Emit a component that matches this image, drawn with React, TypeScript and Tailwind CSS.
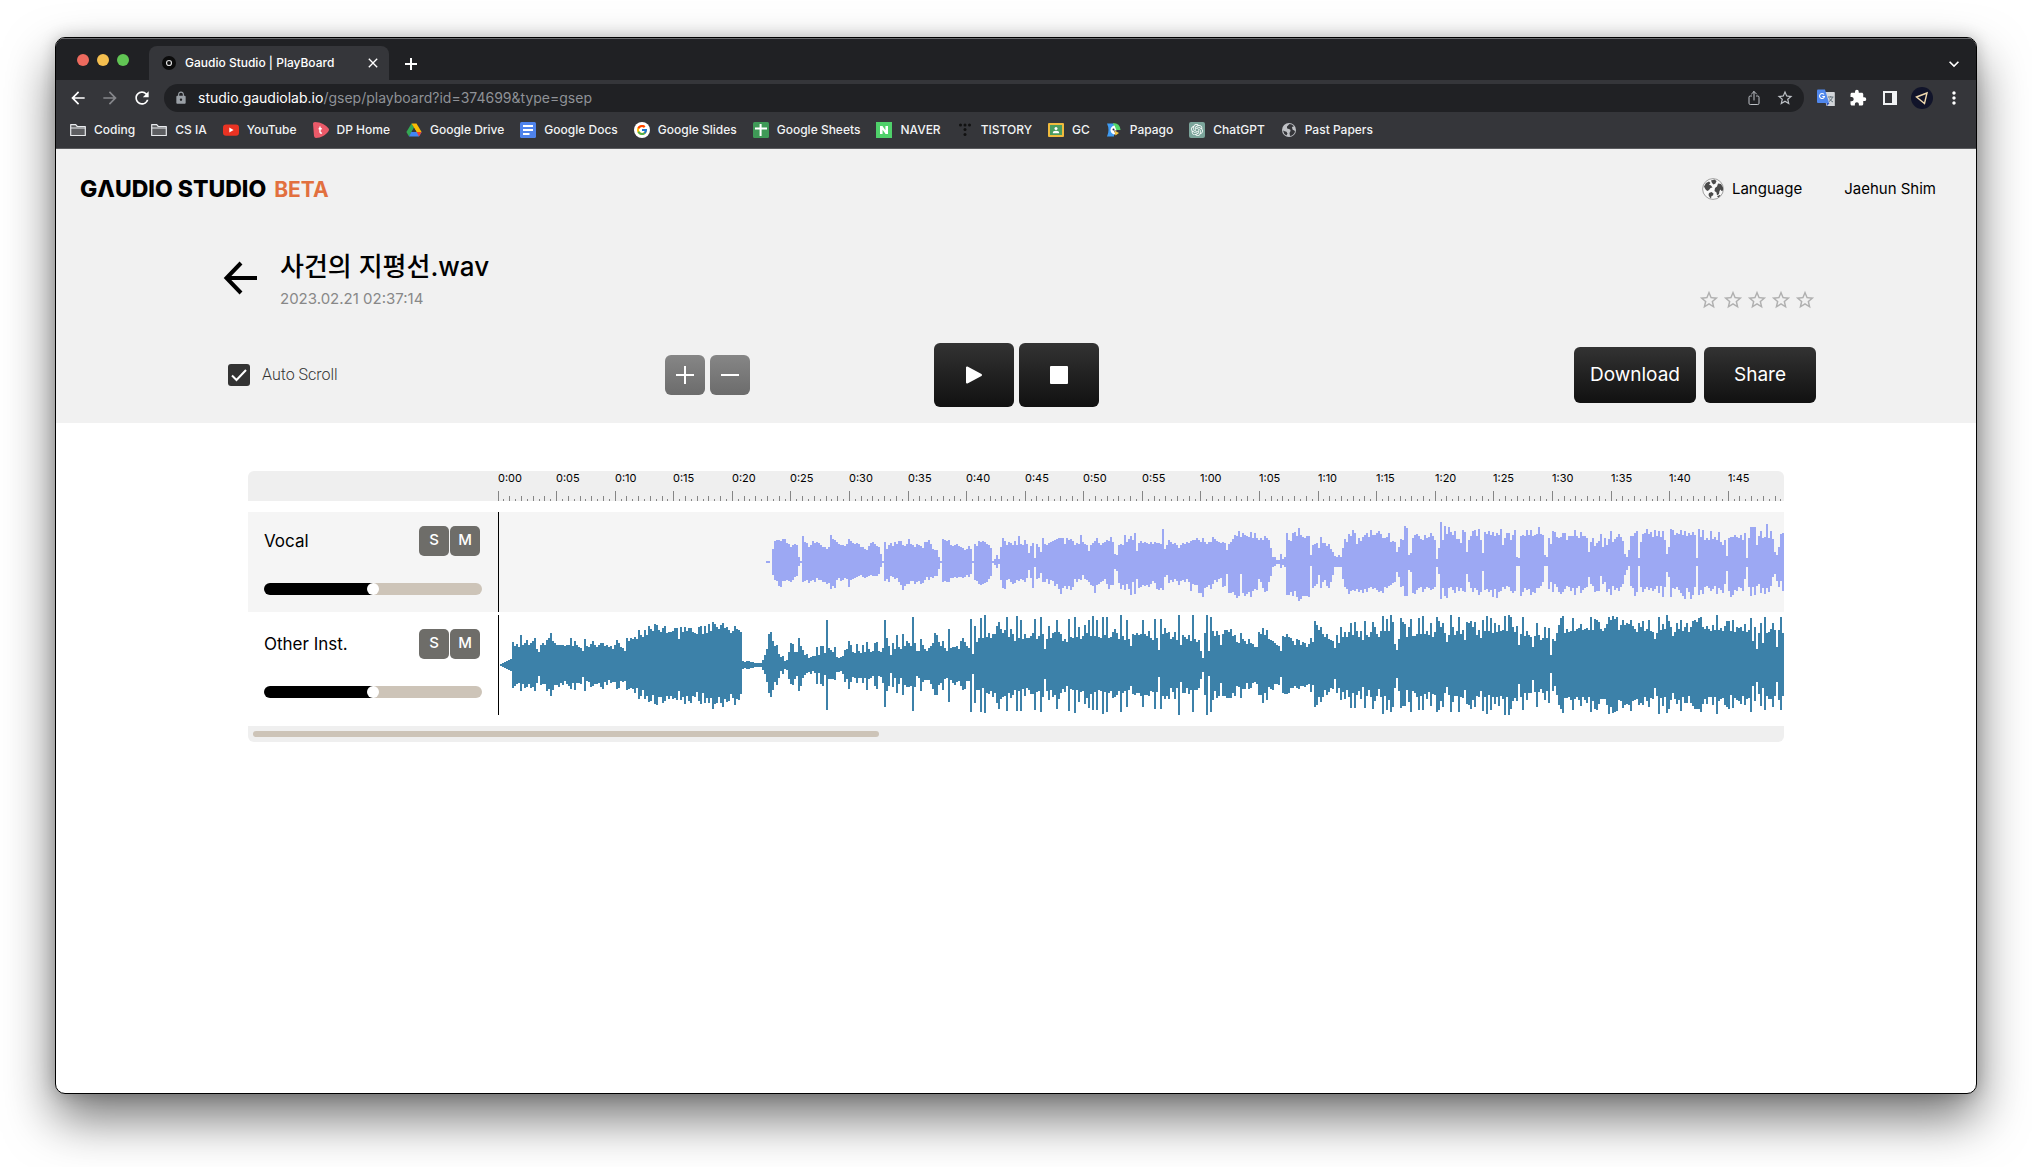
import type { ReactNode } from "react";
import { FcGoogle } from "react-icons/fc";
import { IoShareOutline } from "react-icons/io5";
import {
  MdArrowBack,
  MdArrowForward,
  MdClose,
  MdExtension,
  MdKeyboardArrowDown,
  MdLock,
  MdMoreVert,
  MdRefresh,
  MdStarBorder,
} from "react-icons/md";
import { SiNaver, SiOpenai } from "react-icons/si";

const PX_PER_SECOND = 58.58 / 5;
const BAR_WIDTH = 2;

// first audible bar of the vocal track
const VOCAL_START = 134;

const VOCAL_UP = [
  1, 1, 0, 13, 21, 22, 22, 21, 23, 23, 19, 18, 15, 17, 18, 17, 5, 1, 26, 20, 19, 15, 17, 21, 19, 20, 19, 17, 15, 15, 13, 15,
  27, 23, 22, 20, 18, 17, 17, 16, 18, 23, 21, 19, 18, 19, 18, 15, 15, 13, 12, 16, 19, 20, 18, 16, 15, 8, 1, 20, 13, 17, 19,
  16, 20, 18, 21, 21, 17, 16, 18, 23, 18, 17, 15, 18, 17, 16, 14, 20, 20, 22, 18, 13, 12, 12, 5, 1, 23, 22, 21, 22, 17, 16,
  17, 18, 16, 15, 14, 12, 13, 16, 13, 1, 18, 16, 21, 20, 21, 20, 18, 17, 14, 1, 3, 7, 3, 15, 24, 21, 17, 20, 19, 17, 21, 17,
  26, 18, 17, 22, 18, 9, 16, 19, 4, 18, 15, 10, 24, 18, 17, 19, 20, 21, 22, 23, 24, 24, 24, 18, 24, 22, 23, 21, 17, 19, 18,
  27, 20, 18, 17, 11, 17, 19, 21, 24, 19, 17, 19, 20, 22, 21, 25, 20, 8, 7, 17, 18, 17, 27, 20, 23, 26, 22, 29, 11, 19, 21,
  19, 20, 19, 18, 20, 18, 20, 19, 19, 18, 33, 13, 17, 22, 20, 18, 19, 17, 14, 17, 19, 18, 20, 19, 21, 22, 22, 24, 22, 20,
  24, 20, 18, 20, 20, 25, 23, 21, 20, 19, 20, 19, 12, 18, 20, 23, 27, 26, 31, 25, 29, 27, 26, 25, 30, 24, 29, 24, 22, 24,
  22, 26, 24, 22, 14, 5, 5, 2, 2, 8, 3, 5, 29, 22, 21, 29, 30, 26, 34, 27, 25, 24, 26, 26, 7, 17, 18, 19, 14, 25, 19, 19,
  16, 18, 13, 10, 6, 5, 7, 5, 14, 23, 20, 28, 26, 32, 29, 18, 24, 21, 25, 27, 29, 25, 32, 27, 27, 29, 31, 28, 24, 24, 25,
  29, 20, 21, 20, 10, 15, 23, 22, 36, 34, 7, 9, 24, 27, 28, 26, 23, 22, 27, 24, 25, 29, 26, 22, 3, 14, 40, 22, 36, 28, 35,
  30, 27, 31, 23, 23, 19, 32, 30, 10, 22, 26, 31, 32, 26, 33, 22, 9, 30, 28, 31, 27, 30, 26, 29, 27, 33, 17, 24, 29, 29,
  22, 27, 32, 5, 4, 26, 27, 26, 32, 27, 32, 26, 27, 28, 35, 28, 27, 7, 5, 24, 18, 31, 30, 25, 24, 25, 29, 29, 22, 26, 26,
  26, 32, 26, 24, 30, 26, 26, 24, 10, 20, 24, 16, 19, 21, 28, 15, 24, 17, 23, 31, 20, 23, 25, 28, 25, 21, 8, 5, 12, 26, 26,
  29, 31, 4, 20, 28, 29, 33, 28, 30, 25, 32, 26, 31, 25, 31, 22, 8, 15, 33, 32, 27, 29, 28, 32, 27, 31, 26, 29, 27, 30, 27,
  4, 33, 25, 32, 22, 24, 22, 31, 23, 25, 22, 30, 20, 17, 22, 6, 24, 25, 25, 27, 25, 24, 27, 22, 29, 4, 24, 35, 35, 35, 17,
  26, 31, 24, 25, 38, 24, 31, 23, 10, 7, 15, 28, 29,
];

const VOCAL_DOWN = [
  1, 1, 0, 13, 18, 19, 24, 25, 19, 19, 18, 19, 20, 18, 15, 14, 4, 1, 20, 19, 18, 21, 19, 18, 20, 16, 18, 18, 20, 20, 22, 21,
  27, 24, 26, 18, 16, 19, 18, 16, 17, 25, 18, 17, 16, 15, 14, 13, 15, 16, 15, 14, 13, 14, 14, 14, 12, 5, 1, 19, 17, 20, 14,
  15, 17, 16, 20, 23, 28, 24, 22, 22, 19, 19, 22, 20, 19, 22, 21, 18, 15, 18, 15, 16, 14, 14, 7, 1, 20, 19, 20, 20, 16, 16,
  15, 16, 15, 15, 16, 15, 13, 15, 12, 1, 18, 19, 22, 23, 22, 21, 20, 17, 14, 1, 3, 6, 2, 18, 26, 27, 18, 17, 20, 22, 21, 18,
  19, 17, 18, 20, 16, 8, 16, 26, 5, 17, 16, 11, 20, 20, 17, 22, 18, 19, 24, 22, 27, 32, 26, 24, 27, 24, 28, 25, 17, 20, 17,
  18, 13, 17, 18, 20, 23, 24, 31, 23, 22, 20, 19, 17, 22, 27, 23, 23, 7, 9, 21, 27, 23, 28, 22, 27, 33, 20, 32, 17, 26, 25,
  23, 24, 23, 25, 22, 19, 21, 27, 28, 26, 28, 15, 13, 21, 18, 20, 17, 19, 23, 19, 18, 20, 17, 20, 29, 22, 23, 23, 31, 31,
  35, 26, 25, 23, 27, 22, 18, 20, 17, 16, 25, 24, 12, 31, 31, 30, 33, 36, 34, 12, 31, 34, 32, 30, 35, 29, 27, 28, 17, 20,
  26, 30, 29, 20, 14, 5, 4, 2, 2, 6, 3, 5, 33, 33, 30, 34, 29, 35, 39, 37, 34, 34, 34, 35, 4, 26, 24, 22, 13, 26, 20, 18,
  24, 26, 20, 13, 5, 5, 5, 5, 17, 25, 27, 32, 29, 28, 29, 27, 30, 28, 31, 27, 30, 26, 25, 27, 26, 28, 30, 29, 31, 25, 26,
  24, 23, 21, 20, 10, 15, 25, 24, 34, 34, 8, 10, 31, 32, 28, 26, 25, 30, 27, 25, 26, 28, 27, 25, 5, 12, 37, 26, 34, 36, 26,
  25, 28, 31, 25, 29, 26, 29, 30, 12, 20, 26, 30, 26, 28, 33, 30, 9, 28, 27, 30, 28, 35, 27, 36, 30, 29, 25, 27, 24, 25,
  29, 31, 29, 4, 4, 34, 30, 26, 28, 27, 33, 30, 31, 26, 26, 24, 20, 4, 4, 27, 20, 30, 22, 25, 30, 32, 30, 27, 24, 25, 29,
  26, 33, 26, 24, 31, 28, 26, 25, 15, 22, 24, 30, 29, 29, 14, 22, 20, 30, 27, 33, 24, 28, 26, 29, 25, 22, 13, 8, 4, 24, 26,
  34, 30, 4, 25, 30, 27, 25, 28, 26, 29, 27, 24, 31, 24, 35, 25, 10, 15, 35, 26, 27, 25, 28, 31, 34, 37, 26, 30, 37, 33,
  25, 4, 33, 28, 32, 25, 24, 26, 29, 27, 24, 32, 26, 28, 31, 22, 9, 29, 35, 33, 28, 29, 25, 26, 29, 17, 5, 25, 34, 25, 33,
  24, 22, 31, 26, 32, 26, 30, 24, 15, 12, 19, 25, 19,
];

const INST_UP = [
  0, 1, 2, 3, 4, 5, 6, 23, 19, 21, 18, 30, 20, 22, 25, 20, 22, 24, 27, 16, 13, 20, 22, 20, 25, 27, 32, 24, 22, 20, 20, 20, 20,
  19, 20, 20, 27, 19, 24, 20, 18, 17, 14, 26, 19, 18, 21, 24, 20, 18, 20, 22, 22, 19, 20, 18, 19, 16, 20, 25, 22, 18, 17, 14,
  27, 24, 27, 26, 28, 26, 35, 30, 28, 35, 30, 39, 36, 34, 41, 40, 35, 33, 37, 39, 32, 33, 33, 34, 37, 37, 26, 38, 33, 38, 34,
  37, 37, 33, 32, 31, 38, 39, 31, 39, 32, 41, 34, 43, 41, 38, 36, 40, 42, 37, 38, 35, 32, 34, 39, 36, 35, 33, 4, 3, 4, 4, 3,
  3, 2, 2, 2, 2, 5, 10, 16, 31, 33, 24, 19, 20, 11, 8, 9, 4, 5, 13, 22, 21, 13, 13, 27, 19, 15, 10, 11, 7, 8, 9, 9, 18, 10,
  19, 19, 12, 45, 17, 15, 13, 18, 8, 7, 8, 9, 15, 16, 24, 20, 13, 12, 21, 14, 12, 20, 13, 23, 16, 13, 14, 22, 23, 14, 13, 17,
  45, 27, 19, 10, 22, 16, 30, 18, 16, 31, 19, 24, 22, 19, 48, 22, 14, 14, 26, 20, 16, 14, 17, 19, 22, 32, 30, 23, 19, 24, 17,
  14, 36, 17, 18, 18, 19, 16, 24, 27, 23, 19, 17, 46, 11, 39, 23, 27, 47, 27, 50, 28, 32, 27, 31, 31, 39, 43, 36, 32, 35, 48,
  28, 36, 31, 24, 49, 27, 45, 26, 31, 27, 27, 29, 32, 46, 26, 29, 48, 31, 16, 26, 39, 27, 32, 33, 45, 33, 31, 24, 26, 23, 46,
  28, 27, 48, 28, 38, 26, 29, 40, 32, 45, 29, 49, 29, 45, 28, 27, 48, 30, 48, 27, 28, 33, 36, 32, 26, 50, 29, 25, 45, 26, 19,
  31, 30, 32, 30, 31, 45, 31, 29, 34, 27, 25, 46, 27, 15, 46, 31, 37, 32, 33, 26, 28, 33, 25, 50, 20, 30, 28, 26, 30, 24, 50,
  26, 23, 25, 14, 7, 32, 50, 14, 48, 34, 29, 34, 30, 20, 31, 35, 35, 33, 36, 29, 30, 23, 22, 32, 26, 24, 21, 26, 22, 21, 18,
  18, 33, 31, 37, 30, 35, 26, 25, 24, 22, 20, 19, 14, 29, 28, 31, 28, 27, 24, 20, 26, 25, 20, 23, 22, 18, 21, 27, 23, 44, 40,
  35, 38, 31, 28, 31, 26, 25, 24, 17, 30, 22, 38, 28, 33, 28, 33, 42, 30, 43, 34, 28, 34, 25, 44, 30, 28, 33, 43, 38, 31, 28,
  34, 49, 34, 46, 34, 50, 43, 21, 15, 26, 47, 43, 41, 28, 38, 46, 29, 29, 31, 47, 31, 49, 31, 34, 30, 42, 28, 33, 48, 44, 38,
  42, 32, 23, 30, 50, 38, 30, 34, 48, 31, 35, 25, 43, 42, 44, 38, 43, 30, 35, 27, 45, 34, 49, 34, 47, 32, 42, 33, 40, 34, 35,
  49, 34, 50, 48, 38, 33, 39, 20, 31, 48, 29, 34, 30, 28, 18, 29, 42, 30, 25, 27, 38, 27, 37, 10, 26, 24, 32, 40, 47, 49, 32,
  36, 33, 34, 47, 34, 36, 37, 41, 35, 36, 37, 35, 48, 35, 46, 45, 43, 36, 34, 37, 41, 48, 45, 49, 46, 48, 35, 40, 45, 40, 42,
  41, 45, 39, 36, 33, 42, 38, 44, 34, 36, 45, 34, 33, 26, 32, 48, 35, 41, 36, 50, 44, 38, 29, 33, 42, 36, 45, 34, 38, 42, 33,
  38, 44, 45, 43, 47, 48, 38, 36, 39, 36, 34, 40, 35, 50, 35, 37, 34, 39, 44, 44, 34, 45, 33, 38, 37, 38, 34, 41, 33, 35, 47,
  24, 38, 16, 32, 42, 22, 48, 32, 33, 36, 42, 35, 18, 35, 48, 32,
];

// the instrument track is close to symmetric, the lower half only wobbles a little
const INST_DOWN = INST_UP.map((h, i) =>
  h < 8 ? h : Math.min(50, Math.round(h * 0.98 + ((i * 37) % 11) / 2 - 3))
);

const wavePath = (up: number[], down: number[], start = 0) =>
  up
    .map((h, i) => {
      const d = down[i] ?? h;
      return h + d === 0 ? "" : `M${(start + i) * BAR_WIDTH} ${50 - h}h${BAR_WIDTH}v${h + d}h-${BAR_WIDTH}z`;
    })
    .join("");

const tracks = [
  {
    name: "Vocal",
    row: "bg-[#f5f5f5]",
    wave: "fill-[#9ca8f3]",
    path: wavePath(VOCAL_UP, VOCAL_DOWN, VOCAL_START),
  },
  {
    name: "Other Inst.",
    row: "bg-white",
    wave: "fill-[#3c81a9]",
    path: wavePath(INST_UP, INST_DOWN),
  },
];

const FolderIcon = () => (
  <svg viewBox="0 0 16 16" className="w-4 h-4">
    <path d="M.7 2.6h5l1.6 1.9h8v9H.7z" fill="#5d5e61" stroke="#e8eaed" strokeWidth="1.2" strokeLinejoin="round" />
    <path d="M.7 6h14.6" stroke="#e8eaed" />
  </svg>
);

const YoutubeIcon = () => (
  <svg viewBox="0 0 16 16" className="w-4 h-4">
    <rect y="2.4" width="16" height="11.4" rx="3" fill="#ea3323" />
    <path d="M6.3 5.6v5l4.3-2.5z" fill="#fff" />
  </svg>
);

const DpIcon = () => (
  <svg viewBox="0 0 16 16" className="w-4 h-4">
    <path d="M0 1.5Q0 0 2 0c6 0 11 3 13.6 6.6q.8 1.2 0 2.4C13 13 8 16 3 16q-1.6 0-2-2z" fill="#eb5a69" />
    <path d="M7 4.6v5.2q0 1.6 2 1.2M5.6 6.7h3.2" fill="none" stroke="#fff" strokeWidth="1.4" />
  </svg>
);

const DriveIcon = () => (
  <svg viewBox="0 0 16 16" className="w-4 h-4">
    <path d="M5.5 1.5 8 5.8 3 14.4.4 10z" fill="#34a853" />
    <path d="M5.5 1.5h5L15.6 10h-5z" fill="#fbbc04" />
    <path d="M5.3 10.1h10.3L13 14.5H3z" fill="#4285f4" />
    <path d="M10.6 10.1h5L13 14.5z" fill="#ea4335" />
    <path d="M8 6 5.6 10.1h4.8z" fill="#35363a" />
  </svg>
);

const DocsIcon = () => (
  <svg viewBox="0 0 16 16" className="w-4 h-4">
    <rect width="16" height="16" rx="1.5" fill="#4f83ec" />
    <path d="M3 4h10M3 8h10M3 12h6.5" stroke="#fff" strokeWidth="1.8" />
  </svg>
);

const SlidesIcon = () => (
  <span className="grid place-items-center w-4 h-4 rounded-full bg-white">
    <FcGoogle className="w-3 h-3" />
  </span>
);

const SheetsIcon = () => (
  <svg viewBox="0 0 16 16" className="w-4 h-4">
    <rect width="16" height="16" rx="1.5" fill="#3f9a57" />
    <path d="M2 6.5h12M7.6 2v12" stroke="#fff" strokeWidth="2" />
  </svg>
);

const NaverIcon = () => (
  <span className="grid place-items-center w-4 h-4 bg-[#4fd06a]">
    <SiNaver className="w-2 h-2 text-white" />
  </span>
);

const TistoryIcon = () => (
  <svg viewBox="0 0 16 16" className="w-4 h-4" fill="#111">
    <circle cx="3.5" cy="3" r="1.5" />
    <circle cx="8" cy="3" r="1.5" />
    <circle cx="12.5" cy="3" r="1.5" />
    <circle cx="8" cy="7.5" r="1.5" />
    <circle cx="8" cy="12.5" r="1.5" />
  </svg>
);

const ClassroomIcon = () => (
  <svg viewBox="0 0 16 16" className="w-4 h-4">
    <rect y="1" width="16" height="14" rx="1" fill="#f0bb3d" />
    <rect x="2" y="3" width="12" height="10" fill="#4a9c5f" />
    <circle cx="8" cy="6.5" r="1.5" fill="#fff" />
    <path d="M4.8 11.2q0-2.4 3.2-2.4t3.2 2.4z" fill="#fff" />
  </svg>
);

const PapagoIcon = () => (
  <svg viewBox="0 0 16 16" className="w-4 h-4">
    <path d="M1 1.5h7v13H1q3-6.5 0-13z" fill="#3f9bf2" />
    <path d="M7 1q7 0 7.5 7H9z" fill="#53d769" />
    <path d="M8.5 3.5a4.5 4.5 0 1 0 1 9L8 8.5h2.5z" fill="#fff" />
    <path d="M8.5 8.5l4.5 2.5-3.5 2.5z" fill="#f8c744" />
    <circle cx="7.5" cy="7.5" r="1" fill="#223" />
  </svg>
);

const ChatGptIcon = () => (
  <span className="grid place-items-center w-4 h-4 rounded-xs bg-[#7ba59b]">
    <SiOpenai className="w-3 h-3 text-white" />
  </span>
);

const PastPapersIcon = () => (
  <svg viewBox="0 0 16 16" className="w-4 h-4">
    <circle cx="8" cy="8" r="7" fill="#bfc1c5" />
    <path d="M8.5 2 6 4.5q-.5 2.5 2 2.5 2 .5 1.5 2L8.500 11l.5 3q4.5-.8 5-5l-2.5-1.5L11 5l2-.8Q11 2 8.5 2z" fill="#35363a" />
    <path d="M2 8.5q1.5 1 3.5 1.2l1 1.8-1 2Q2.5 12 2 8.5z" fill="#35363a" />
  </svg>
);

const GlobeIcon = () => (
  <svg viewBox="0 0 22 22" className="w-[22px] h-[22px]">
    <circle cx="11" cy="11" r="10.4" fill="#f8f8f8" stroke="#8a8a8a" strokeWidth=".8" />
    <g fill="#4a4a4a">
      <path d="M2 8.5 4 5l3-1.5L8.5 5 7 6.5l2 1 1.5 2-2 .5-1.5 2-1.5 1L4 12l-1-1.5z" />
      <path d="M9 2.5 12.5 1.5l2 1.5-1 2.5-2 1L10 5z" />
      <path d="M7 15l2.5-1 2 1.5-.5 2-1.5.5-.5 2.5L7.5 19 6.5 17z" />
      <path d="M16 5.5l3 .5 2 3.5v3l-1.5.5-1-1.5-1 1.5-.5 3-2 1.5-.5-3-2-1.5.5-3 2-1.5z" />
      <path d="M15 18.5l2.5-1.5 1 .5-2 2z" />
    </g>
  </svg>
);

const TranslateIcon = () => (
  <svg viewBox="0 0 18 18" className="w-[18px] h-[18px]">
    <path d="M6 3h11q.8 0 .8.8V17H9.5z" fill="#d3d6da" />
    <path d="M11 8h5.5M13.7 7v1.2M12 12.5q3-1.5 3.5-4.5M12.5 9.5q1 2.5 3.5 3.5" stroke="#68777f" fill="none" />
    <path d="M1 .5h7L12 14H1q-1 0-1-1V1.5Q0 .5 1 .5z" fill="#5087ec" />
    <path d="M9.5 14h3L10 17z" fill="#2d50b8" />
    <path d="M7 5.5A2.5 2.5 0 1 0 7.5 7.5H5.3" stroke="#fff" strokeWidth="1.1" fill="none" />
  </svg>
);

const ProfileIcon = () => (
  <svg viewBox="0 0 22 22" className="w-[22px] h-[22px]">
    <circle cx="11" cy="11" r="11" fill="#11142a" />
    <path d="M5.5 10 16 6l-2.5 10.5z" fill="none" stroke="#f0d9b0" strokeWidth="1.4" />
  </svg>
);

const bookmarks: { label: string; icon: ReactNode }[] = [
  { label: "Coding", icon: <FolderIcon /> },
  { label: "CS IA", icon: <FolderIcon /> },
  { label: "YouTube", icon: <YoutubeIcon /> },
  { label: "DP Home", icon: <DpIcon /> },
  { label: "Google Drive", icon: <DriveIcon /> },
  { label: "Google Docs", icon: <DocsIcon /> },
  { label: "Google Slides", icon: <SlidesIcon /> },
  { label: "Google Sheets", icon: <SheetsIcon /> },
  { label: "NAVER", icon: <NaverIcon /> },
  { label: "TISTORY", icon: <TistoryIcon /> },
  { label: "GC", icon: <ClassroomIcon /> },
  { label: "Papago", icon: <PapagoIcon /> },
  { label: "ChatGPT", icon: <ChatGptIcon /> },
  { label: "Past Papers", icon: <PastPapersIcon /> },
];

const TabStrip = () => (
  <div className="flex items-end h-[41px] pl-[21px] pr-3 bg-[#202124]">
    <div className="flex gap-2 self-center">
      <button aria-label="Close window" className="w-3 h-3 rounded-full bg-[#ed6a5e]" />
      <button aria-label="Minimize window" className="w-3 h-3 rounded-full bg-[#f5bf4f]" />
      <button aria-label="Zoom window" className="w-3 h-3 rounded-full bg-[#61c554]" />
    </div>
    <div className="flex items-center w-60 h-[34px] ml-5 pl-3 pr-2 rounded-t-lg bg-[#35363a] text-white">
      <svg viewBox="0 0 16 16" className="w-4 h-4 mr-2">
        <circle cx="8" cy="8" r="7" fill="#0c0c0c" />
        <circle cx="8" cy="8" r="2.5" fill="none" stroke="#ddd" strokeWidth="1.2" />
      </svg>
      <p className="flex-1 text-xs font-medium whitespace-nowrap">Gaudio Studio | PlayBoard</p>
      <button aria-label="Close tab">
        <MdClose className="w-4 h-4" />
      </button>
    </div>
    <button aria-label="New tab" className="self-center ml-4 mt-2 text-white">
      <svg viewBox="0 0 12 12" className="w-3 h-3">
        <path d="M6 0v12M0 6h12" stroke="currentColor" strokeWidth="2" />
      </svg>
    </button>
    <button aria-label="Search tabs" className="self-center ml-auto mt-2 text-white">
      <MdKeyboardArrowDown className="w-5 h-5" />
    </button>
  </div>
);

const AddressBar = () => (
  <div className="flex items-center h-9 pl-3 pr-1.5 text-white">
    <div className="flex gap-3">
      <button aria-label="Back">
        <MdArrowBack className="w-5 h-5" />
      </button>
      <button aria-label="Forward">
        <MdArrowForward className="w-5 h-5 text-[#85868a]" />
      </button>
      <button aria-label="Reload">
        <MdRefresh className="w-5 h-5" />
      </button>
    </div>
    <div className="flex flex-1 items-center h-7 ml-3 px-2.5 rounded-full bg-[#202124] text-[#bdc1c6]">
      <MdLock className="w-3.5 h-3.5 mr-2.5 text-[#9aa0a6]" />
      <p className="flex-1 text-sm text-[#8f9297]">
        <span className="text-white">studio.gaudiolab.io</span>/gsep/playboard?id=374699&amp;type=gsep
      </p>
      <button aria-label="Share this page">
        <IoShareOutline className="w-4 h-4" />
      </button>
      <button aria-label="Bookmark this page" className="ml-3.5">
        <MdStarBorder className="w-[18px] h-[18px]" />
      </button>
    </div>
    <div className="grid grid-cols-5 place-items-center w-40 ml-1.5">
      <button aria-label="Translate">
        <TranslateIcon />
      </button>
      <button aria-label="Extensions">
        <MdExtension className="w-[18px] h-[18px]" />
      </button>
      <button aria-label="Side panel">
        <svg viewBox="0 0 16 16" className="w-4 h-4">
          <path d="M1 1h14v14H1z" fill="#f1f3f4" />
          <path d="M3 3h7v10H3z" fill="#35363a" />
        </svg>
      </button>
      <button aria-label="Profile">
        <ProfileIcon />
      </button>
      <button aria-label="Browser menu">
        <MdMoreVert className="w-5 h-5" />
      </button>
    </div>
  </div>
);

const BookmarkBar = () => (
  <nav className="flex items-center gap-4 h-[33px] pl-3.5 pb-1 border-b border-[#5b5c5f] overflow-hidden">
    {bookmarks.map(({ label, icon }) => (
      <a key={label} href="#" className="flex shrink-0 items-center gap-2 text-xs font-medium text-[#f1f3f4]">
        {icon}
        {label}
      </a>
    ))}
  </nav>
);

const SiteHeader = () => (
  <header className="flex items-center justify-between h-20 pl-6 pr-10">
    <a href="#" className="flex items-baseline gap-2 leading-6 text-black">
      <span className="text-[23px] font-extrabold">GΛUDIO STUDIO</span>
      <span className="text-[21px] font-bold text-[#e2703f]">BETA</span>
    </a>
    <div className="flex gap-[42px] text-[15px] text-black">
      <button className="flex items-center gap-2">
        <GlobeIcon />
        Language
      </button>
      <button>Jaehun Shim</button>
    </div>
  </header>
);

const FileInfo = () => (
  <div className="flex justify-between px-40 pt-5">
    <div className="flex items-center gap-5">
      <button aria-label="Back to list" className="ml-1 mb-1">
        <svg viewBox="0 0 40 40" className="w-10 h-10" fill="none" stroke="#000" strokeWidth="4">
          <path d="M37 20H7M21 5 6.5 20 21 35" />
        </svg>
      </button>
      <div>
        <h1 className="text-[26px] leading-9 font-medium text-black">사건의 지평선.wav</h1>
        <p className="mt-0.5 text-[15px] leading-6 text-[#888]">2023.02.21 02:37:14</p>
      </div>
    </div>
    <div className="flex items-end gap-0.5">
      {[1, 2, 3, 4, 5].map((n) => (
        <button key={n} aria-label={`Rate ${n}`}>
          <MdStarBorder className="w-[22px] h-[22px] text-[#b0b0b0]" />
        </button>
      ))}
    </div>
  </div>
);

const Controls = () => (
  <div className="grid grid-cols-[1fr_auto_1fr] items-center px-40 pt-8 pb-4">
    <div className="flex items-center justify-between pl-3 pr-46">
      <label className="flex items-center gap-3 font-[Roboto] text-base font-light text-[#333]">
        <span className="grid">
          <input
            type="checkbox"
            defaultChecked
            className="col-start-1 row-start-1 appearance-none w-[22px] h-[22px] rounded-[3px] bg-[#333]"
          />
          <svg
            viewBox="0 0 22 22"
            className="col-start-1 row-start-1 w-[22px] h-[22px] pointer-events-none"
            fill="none"
            stroke="#fff"
            strokeWidth="2"
          >
            <path d="M4 11.5 8.5 16 18 6" />
          </svg>
        </span>
        Auto Scroll
      </label>
      <div className="flex gap-[5px]">
        <button
          aria-label="Zoom in"
          className="grid place-items-center w-10 h-10 rounded-md bg-linear-to-b from-[#868686] to-[#6c6c6c]"
        >
          <svg viewBox="0 0 18 18" className="w-[18px] h-[18px]">
            <path d="M9 0v18M0 9h18" stroke="#fff" strokeWidth="2" />
          </svg>
        </button>
        <button
          aria-label="Zoom out"
          className="grid place-items-center w-10 h-10 rounded-md bg-linear-to-b from-[#868686] to-[#6c6c6c]"
        >
          <svg viewBox="0 0 18 18" className="w-[18px] h-[18px]">
            <path d="M0 9h18" stroke="#fff" strokeWidth="2" />
          </svg>
        </button>
      </div>
    </div>
    <div className="flex gap-[5px]">
      <button
        aria-label="Play"
        className="grid place-items-center w-20 h-16 rounded-md bg-linear-to-b from-[#333] to-[#111]"
      >
        <svg viewBox="0 0 18 18" className="w-[18px] h-[18px]">
          <path d="M2 1.5v15l14-7.5z" fill="#fff" stroke="#fff" strokeWidth="2" strokeLinejoin="round" />
        </svg>
      </button>
      <button
        aria-label="Stop"
        className="grid place-items-center w-20 h-16 rounded-md bg-linear-to-b from-[#333] to-[#111]"
      >
        <span className="w-[18px] h-[18px] rounded-[1px] bg-white" />
      </button>
    </div>
    <div className="flex justify-end gap-2 text-[19px] text-white">
      <button className="w-[122px] h-14 rounded-md bg-linear-to-b from-[#333] to-[#111]">Download</button>
      <button className="w-28 h-14 rounded-md bg-linear-to-b from-[#333] to-[#111]">Share</button>
    </div>
  </div>
);

const Ruler = () => {
  const ticks = Array.from({ length: 220 }, (_, i) => i);

  return (
    <div className="h-[30px] pl-[250px] rounded-t-md bg-[#efefef] overflow-hidden">
      <svg className="w-full h-[30px]">
        {ticks.map((i) => {
          const x = Math.floor((i / 2) * PX_PER_SECOND);
          const height = i % 10 === 0 ? 10 : i % 2 === 0 ? 5 : 2;
          return <rect key={i} x={x} y={30 - height} width="1" height={height} fill="#858585" />;
        })}
        {ticks
          .filter((i) => i % 10 === 0)
          .map((i) => {
            const seconds = i / 2;
            const label = `${Math.floor(seconds / 60)}:${String(seconds % 60).padStart(2, "0")}`;
            return (
              <text key={i} x={Math.floor(seconds * PX_PER_SECOND)} y="11" className="text-[11px] fill-black">
                {label}
              </text>
            );
          })}
      </svg>
    </div>
  );
};

const Track = ({ name, row, wave, path }: { name: string; row: string; wave: string; path: string }) => (
  <div className={`flex h-[100px] ${row}`}>
    <div className="flex flex-col justify-between shrink-0 w-[250px] px-4 pt-3.5 pb-[17px]">
      <div className="flex items-center justify-between pr-0.5">
        <p className="text-[17px] leading-6 text-black">{name}</p>
        <div className="flex gap-px text-[15px] font-medium text-white">
          <button aria-label={`Solo ${name}`} className="w-[30px] h-[30px] pb-0.5 rounded-[5px] bg-[#6e6d69]">
            S
          </button>
          <button aria-label={`Mute ${name}`} className="w-[30px] h-[30px] pb-0.5 rounded-[5px] bg-[#6e6d69]">
            M
          </button>
        </div>
      </div>
      <input
        type="range"
        aria-label={`${name} volume`}
        defaultValue={50}
        className="appearance-none w-full h-3 rounded-full bg-[linear-gradient(to_right,#000_50%,#cdc4b8_50%)] [&::-webkit-slider-thumb]:appearance-none [&::-webkit-slider-thumb]:w-3 [&::-webkit-slider-thumb]:h-3 [&::-webkit-slider-thumb]:rounded-full [&::-webkit-slider-thumb]:bg-white"
      />
    </div>
    <div className="flex flex-1 min-w-0">
      <div className="w-px bg-black" />
      <svg className="flex-1 min-w-0 h-[100px] -ml-px">
        <path d={path} className={wave} shapeRendering="crispEdges" />
      </svg>
    </div>
  </div>
);

const Timeline = () => (
  <section className="w-4/5 mx-auto mt-12">
    <Ruler />
    <div className="flex flex-col gap-[3px] mt-[11px]">
      {tracks.map((track) => (
        <Track key={track.name} {...track} />
      ))}
    </div>
    <div className="h-4 mt-[11px] px-[5px] py-[5px] rounded-b-md bg-[#efefef]">
      <div className="w-[41%] h-1.5 rounded-full bg-[#cdc4b8]" />
    </div>
  </section>
);

const App = () => {
  return (
    <div className="flex min-h-screen px-[55px] pt-[37px] pb-[73px] bg-white font-[Inter,'Noto_Sans_CJK_KR',sans-serif]">
      <div className="flex flex-col flex-1 min-w-0 border border-black rounded-[10px] overflow-hidden bg-white shadow-[0_24px_50px_rgba(0,0,0,0.55),0_0_16px_rgba(0,0,0,0.2)]">
        <div className="border-t border-[#6b6c6f] bg-[#35363a]">
          <TabStrip />
          <AddressBar />
          <BookmarkBar />
        </div>
        <div className="bg-[#f1f1f1]">
          <SiteHeader />
          <FileInfo />
          <Controls />
        </div>
        <Timeline />
      </div>
    </div>
  );
};

export default App;
